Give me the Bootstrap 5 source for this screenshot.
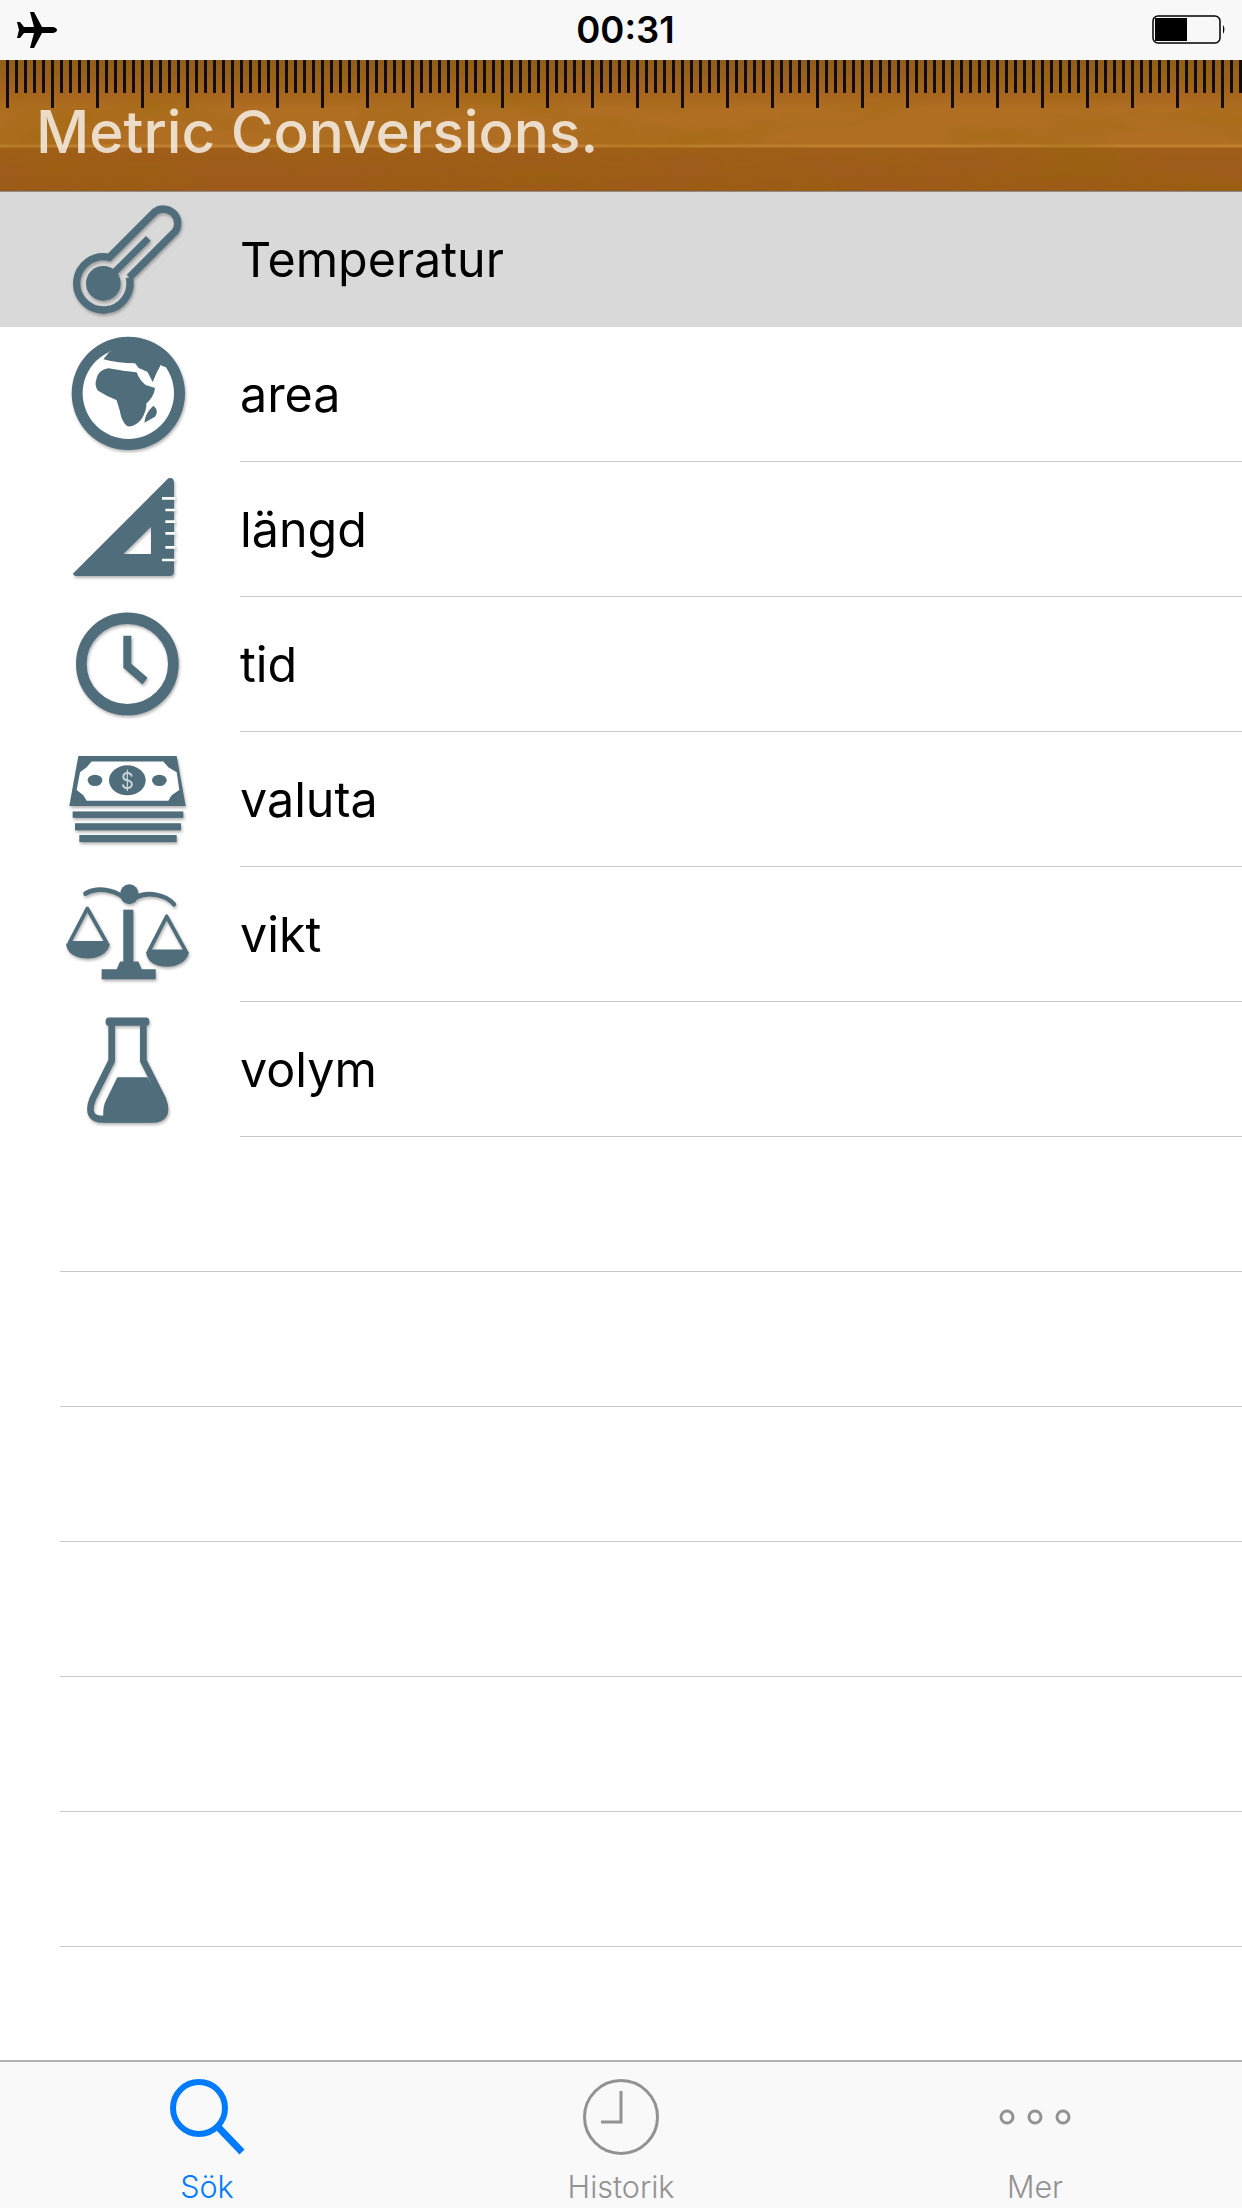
<!DOCTYPE html>
<html lang="sv">
<head>
    <meta charset="UTF-8">
    <title>Metric Conversions</title>
    <meta name="viewport" content="width=device-width, initial-scale=1">
    <link href="https://cdn.jsdelivr.net/npm/bootstrap@5.3.3/dist/css/bootstrap.min.css" rel="stylesheet">
    <style>
        body {
            width: 1242px;
            height: 2208px;
            overflow: hidden;
            background: #fff;
            font-family: Inter, "Liberation Sans", sans-serif;
        }
        .status-bar {
            height: 60px;
            background: #f8f8f8;
            padding: 0 16px 0 17px;
            font-size: 36.5px;
            font-weight: 600;
            color: #000;
        }
        .status-side { width: 300px; }
        .status-time { padding-left: 8px; }
        .ruler-head {
            height: 132px;
            padding: 37px 0 0 36px;
            border-bottom: 1px solid #8d8d8d;
            color: rgba(255, 255, 255, .76);
            font-size: 58.4px;
            font-weight: 500;
            line-height: 70px;
            background:
                repeating-linear-gradient(90deg, transparent 0 6px, #120c04 6px 9px) 0 0 / 100% 33px no-repeat,
                repeating-linear-gradient(90deg, transparent 0 6px, #120c04 6px 9px, transparent 9px 45px) 0 0 / 100% 48px no-repeat,
                url("data:image/svg+xml,%3Csvg xmlns='http://www.w3.org/2000/svg' width='1242' height='132'%3E%3Cfilter id='g'%3E%3CfeTurbulence type='fractalNoise' baseFrequency='.007 .03' numOctaves='3' seed='7'/%3E%3CfeColorMatrix values='0 0 0 0 .3 0 0 0 0 .14 0 0 0 0 0 .9 0 0 0 -.38'/%3E%3C/filter%3E%3Crect width='1242' height='132' filter='url(%23g)'/%3E%3C/svg%3E") 0 0 no-repeat,
                linear-gradient(180deg, #8f5c1c 0, #a6651f 33px, #b06e23 48px, #b06e23 84px, #c08030 85px, #c08030 87px, #a05e1a 88px, #9c5919 131px);
        }
        .conv-row {
            height: 135px;
            font-size: 48.4px;
            color: #000;
        }
        .conv-row.active-row { background: #d9d9d9; }
        .conv-icon {
            width: 200px;
            height: 135px;
            margin-left: 40px;
            flex: none;
            fill: #4f6d7a;
            stroke: none;
            filter: drop-shadow(1px 2px 1.5px rgba(0, 0, 0, .3));
        }
        .conv-icon .ln { fill: none; stroke: #4f6d7a; }
        .conv-icon .cut { fill: none; stroke: #fff; }
        .conv-icon .land { stroke: #4f6d7a; stroke-width: 6; stroke-linejoin: round; }
        .conv-label {
            height: 135px;
            padding-top: 2px;
            border-bottom: 1px solid #c8c7cc;
        }
        .active-row .conv-label { border-bottom: 0; }
        .empty-row {
            height: 135px;
            margin-left: 60px;
            border-bottom: 1px solid #c8c7cc;
        }
        .tab-bar {
            height: 148px;
            background: #f9f9f9;
            border-top: 2px solid #b2b2b2;
        }
        .tab-item {
            width: 414px;
            color: #929292;
            font-size: 30.5px;
            line-height: 36px;
            font-weight: 300;
        }
        .tab-item.on { color: #007aff; }
        .tab-item svg { display: block; margin-bottom: 13px; }
    </style>
</head>
<body class="d-flex flex-column">

<div class="status-bar d-flex justify-content-between align-items-center">
    <div class="status-side">
        <svg class="d-block" width="40" height="36" viewBox="0 0 40 36">
            <path d="M13 0 L17 0 L25 15 L36 15 Q40 16 40 18 Q40 20 36 21 L25 21 L17 36 L13 36 L17 21 L7 21 L3 26 L0 26 L2 18 L0 10 L3 10 L7 15 L17 15 Z" fill="#000"/>
        </svg>
    </div>
    <span class="status-time">00:31</span>
    <div class="status-side d-flex justify-content-end">
        <svg class="d-block" width="74" height="30" viewBox="0 0 74 30">
            <rect x="1" y="1" width="67" height="27" rx="5" fill="none" stroke="#000" stroke-width="1.5"/>
            <rect x="3" y="3" width="32" height="23" fill="#000"/>
            <path d="M71 10 Q74 14 71 19 Z" fill="#000"/>
        </svg>
    </div>
</div>

<header class="ruler-head">Metric Conversions.</header>

<div class="flex-grow-1">
    <div class="conv-row active-row d-flex">
        <svg class="conv-icon" viewBox="0 6 600 405">
            <path class="ln" stroke-width="22" d="M268 262 L405 125 A43 43 0 0 0 345 65 L208 202 A80 80 0 1 0 268 262"/>
            <circle cx="190" cy="280" r="52"/>
            <path class="ln" stroke-width="20" d="M225 245 L325 145"/>
        </svg>
        <div class="conv-label flex-grow-1 d-flex align-items-center">Temperatur</div>
    </div>
    <div class="conv-row d-flex">
        <svg class="conv-icon" viewBox="0 411 600 405">
            <circle cx="265" cy="610" r="170"/>
            <circle cx="265" cy="610" r="137" fill="#fff"/>
            <path d="M208 486 L190 508 Q235 520 285 520 L296 534 L322 545 L338 576 L350 548 L362 525 L376 532 L385 505 L330 465 L265 452 Z"/>
            <path class="land" d="M172 568 Q178 542 205 538 L250 545 L288 550 Q296 572 316 588 L342 596 Q338 620 316 640 Q318 662 300 688 Q282 708 264 706 Q248 696 242 660 L232 628 Q200 616 176 600 Q166 585 172 568 Z"/>
            <path d="M340 647 Q358 660 345 680 L313 698 Q315 670 340 647 Z"/>
        </svg>
        <div class="conv-label flex-grow-1 d-flex align-items-center">area</div>
    </div>
    <div class="conv-row d-flex">
        <svg class="conv-icon" viewBox="0 816 600 405">
            <path fill-rule="evenodd" d="M100 1150 L385 865 Q402 860 402 880 L402 1145 Q402 1158 388 1158 L110 1158 Q98 1158 100 1150 Z M250 1092 L333 1092 L333 1010 Z"/>
            <path class="cut" stroke-width="8" d="M366 925 H406 M376 960 H406 M376 995 H406 M376 1030 H406 M376 1072 H406 M366 1110 H406"/>
        </svg>
        <div class="conv-label flex-grow-1 d-flex align-items-center">längd</div>
    </div>
    <div class="conv-row d-flex">
        <svg class="conv-icon" viewBox="0 19.6 600 378" preserveAspectRatio="none">
            <ellipse class="ln" cx="262" cy="207" rx="138" ry="128" stroke-width="32"/>
            <path class="ln" stroke-width="24" d="M262 128 V212 L315 255"/>
        </svg>
        <div class="conv-label flex-grow-1 d-flex align-items-center">tid</div>
    </div>
    <div class="conv-row d-flex">
        <svg class="conv-icon" viewBox="0 397.6 600 378" preserveAspectRatio="none">
            <path d="M115 465 H410 L437 605 H88 Z"/>
            <path fill="#fff" d="M155 480 H370 L385 496 L410 510 L418 560 L395 575 L385 590 H140 L130 575 L110 560 L120 510 L140 496 Z"/>
            <ellipse cx="262" cy="533" rx="55" ry="42"/>
            <ellipse cx="165" cy="533" rx="22" ry="16"/>
            <ellipse cx="358" cy="533" rx="22" ry="16"/>
            <text x="262" y="556" text-anchor="middle" font-size="62" fill="#c9d5da" font-family="Inter, sans-serif">$</text>
            <rect x="98" y="620" width="332" height="18"/>
            <rect x="105" y="653" width="318" height="20"/>
            <rect x="118" y="686" width="292" height="20"/>
        </svg>
        <div class="conv-label flex-grow-1 d-flex align-items-center">valuta</div>
    </div>
    <div class="conv-row d-flex">
        <svg class="conv-icon" viewBox="0 775.6 600 378" preserveAspectRatio="none">
            <path class="ln" stroke-width="13" stroke-linecap="round" d="M136 850 C175 830 220 840 250 860 M290 860 C320 845 375 850 402 880"/>
            <circle cx="268" cy="852" r="28"/>
            <rect x="250" y="895" width="30" height="150"/>
            <path d="M185 1062 H230 L240 1040 H295 L305 1062 H347 V1090 H185 Z"/>
            <path class="ln" stroke-width="11" stroke-linejoin="round" d="M142 892 L88 988 H200 Z"/>
            <path d="M78 990 H210 C205 1020 170 1032 145 1032 C110 1032 80 1020 78 990 Z"/>
            <path class="ln" stroke-width="11" stroke-linejoin="round" d="M380 914 L326 1012 H438 Z"/>
            <path d="M318 1013 H447 C442 1043 408 1055 382 1055 C348 1055 320 1043 318 1013 Z"/>
        </svg>
        <div class="conv-label flex-grow-1 d-flex align-items-center">vikt</div>
    </div>
    <div class="conv-row d-flex">
        <svg class="conv-icon" viewBox="0 1153.6 600 378" preserveAspectRatio="none">
            <rect x="197" y="1197" width="131" height="23" rx="10"/>
            <path class="ln" stroke-width="20" stroke-linejoin="round" d="M215 1218 V1318 L158 1425 Q135 1482 190 1482 H335 Q392 1482 368 1425 L310 1318 V1218"/>
            <path d="M232 1364 H322 L372 1440 Q385 1490 335 1490 H190 Q188 1450 195 1435 Z"/>
        </svg>
        <div class="conv-label flex-grow-1 d-flex align-items-center">volym</div>
    </div>
    <div class="empty-row"></div>
    <div class="empty-row"></div>
    <div class="empty-row"></div>
    <div class="empty-row"></div>
    <div class="empty-row"></div>
    <div class="empty-row"></div>
</div>

<nav class="tab-bar d-flex">
    <div class="tab-item on d-flex flex-column align-items-center">
        <svg class="mt-3" width="76" height="78" viewBox="0 0 76 78">
            <circle cx="30" cy="30" r="26" fill="none" stroke="#007aff" stroke-width="6"/>
            <path d="M50 50 L73 74" stroke="#007aff" stroke-width="7" fill="none"/>
        </svg>
        <span>Sök</span>
    </div>
    <div class="tab-item d-flex flex-column align-items-center">
        <svg class="mt-3" width="78" height="78" viewBox="0 0 78 78">
            <circle cx="39" cy="39" r="36.5" fill="none" stroke="#929292" stroke-width="3"/>
            <path d="M39 13 V44 H19" fill="none" stroke="#929292" stroke-width="3"/>
        </svg>
        <span>Historik</span>
    </div>
    <div class="tab-item d-flex flex-column align-items-center">
        <svg class="mt-3" width="78" height="78" viewBox="0 0 78 78">
            <circle cx="11" cy="39" r="6" fill="none" stroke="#929292" stroke-width="3"/>
            <circle cx="39" cy="39" r="6" fill="none" stroke="#929292" stroke-width="3"/>
            <circle cx="67" cy="39" r="6" fill="none" stroke="#929292" stroke-width="3"/>
        </svg>
        <span>Mer</span>
    </div>
</nav>

<script src="https://cdn.jsdelivr.net/npm/bootstrap@5.3.3/dist/js/bootstrap.bundle.min.js"></script>
</body>
</html>
